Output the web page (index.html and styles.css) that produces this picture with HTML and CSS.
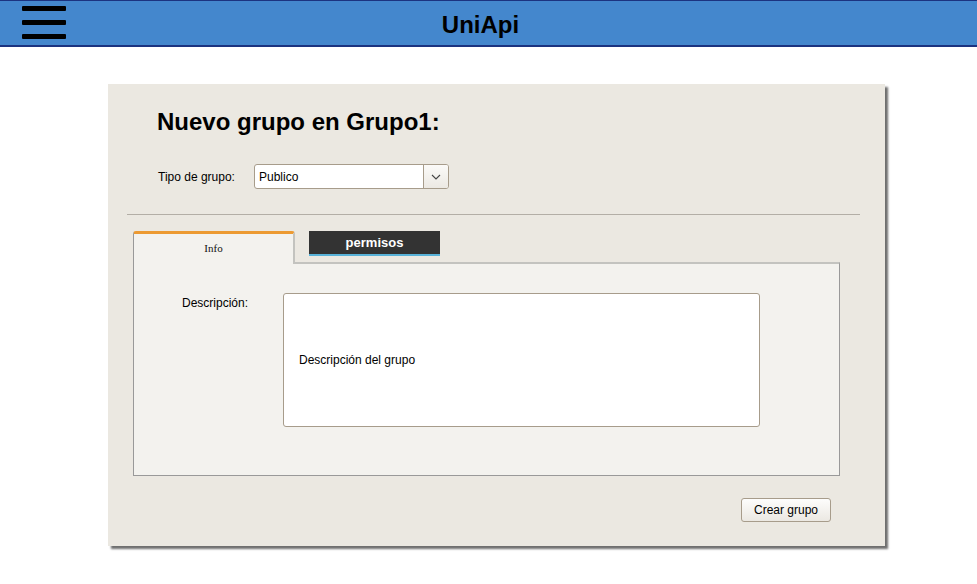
FILE: index.html
```html
<!DOCTYPE html>
<html lang="es">
<head>
<meta charset="utf-8">
<title>UniApi</title>
<link rel="stylesheet" href="styles.css">
</head>
<body>
<header class="topbar">
  <div class="burger"><span></span><span></span><span></span></div>
  <h1 class="brand">UniApi</h1>
</header>
<main class="card">
  <h2 class="card-title">Nuevo grupo en Grupo1:</h2>
  <div class="type-row">
    <label class="type-label">Tipo de grupo:</label>
    <div class="select">
      <span class="select-value">Publico</span>
      <span class="select-btn">
        <svg width="10" height="6" viewBox="0 0 10 6"><path d="M1 1 L5 5 L9 1" fill="none" stroke="#444" stroke-width="1.1"/></svg>
      </span>
    </div>
  </div>
  <hr class="sep">
  <div class="tabs">
    <div class="tab-bar">
      <div class="tab tab-active">Info</div>
      <div class="tab tab-dark">permisos</div>
    </div>
    <div class="panel">
      <div class="desc-row">
        <label class="desc-label">Descripción:</label>
        <div class="textarea">Descripción del grupo</div>
      </div>
    </div>
  </div>
  <div class="actions">
    <button class="btn">Crear grupo</button>
  </div>
</main>
</body>
</html>
```
FILE: styles.css
```css
html, body {
  margin: 0;
  padding: 0;
  background: #ffffff;
  font-family: "Liberation Sans", Arial, sans-serif;
}
body {
  padding-bottom: 30px;
}
.topbar {
  height: 44px;
  background: #4487cd;
  border-top: 1px solid #1c3380;
  border-bottom: 2px solid #1c3380;
  position: relative;
  display: flex;
  align-items: center;
  justify-content: center;
  padding-right: 16px;
}
.burger {
  position: absolute;
  left: 22px;
  top: 5px;
  width: 44px;
  display: flex;
  flex-direction: column;
  gap: 9px;
}
.burger span {
  display: block;
  height: 5px;
  background: #000;
  border-radius: 1px;
}
.brand {
  margin: 0;
  font-size: 24px;
  font-weight: bold;
  color: #000;
  line-height: 1;
  padding-top: 4px;
}
.card {
  display: block;
  margin: 37px 0 0 108px;
  width: 777px;
  height: 462px;
  box-sizing: border-box;
  background: #ebe8e1;
  box-shadow: 3px 3px 2px 0 #6f6f6f;
  padding: 24px 0 0 0;
}
.card-title {
  margin: 0 0 0 49px;
  font-size: 24px;
  font-weight: bold;
  color: #000;
  line-height: 28px;
}
.type-row {
  display: flex;
  align-items: center;
  margin: 28px 0 0 50px;
}
.type-label {
  font-size: 12px;
  color: #000;
  width: 96px;
}
.select {
  width: 195px;
  height: 25px;
  box-sizing: border-box;
  border: 1px solid #a79c8b;
  border-radius: 3px;
  background: #fff;
  display: flex;
  align-items: stretch;
}
.select-value {
  flex: 1;
  font-size: 12px;
  padding-left: 4px;
  display: flex;
  align-items: center;
  color: #000;
}
.select-btn {
  width: 24px;
  border-left: 1px solid #a79c8b;
  background: linear-gradient(#fbfaf8, #ece9e3);
  display: flex;
  align-items: center;
  justify-content: center;
  border-radius: 0 2px 2px 0;
}
.sep {
  margin: 25px 25px 0 19px;
  border: 0;
  border-top: 1px solid #b3aea6;
  height: 0;
}
.tabs {
  margin: 16px 0 0 25px;
  width: 707px;
}
.tab-bar {
  display: flex;
  align-items: flex-start;
  gap: 14px;
  height: 31px;
}
.tab {
  box-sizing: border-box;
}
.tab-active {
  width: 162px;
  height: 33px;
  background: #f3f2ee;
  border-top: 3px solid #ec9a32;
  border-left: 1px solid #999;
  border-right: 2px solid #c3c3bf;
  border-radius: 3px 3px 0 0;
  font-family: "Liberation Serif", "Times New Roman", serif;
  font-size: 11px;
  text-align: center;
  padding-top: 8px;
  position: relative;
  z-index: 1;
  color: #111;
}
.tab-dark {
  width: 131px;
  height: 25px;
  background: #333;
  border-bottom: 2px solid #58b2d8;
  color: #fff;
  font-weight: bold;
  font-size: 13px;
  text-align: center;
  padding-top: 4px;
}
.panel {
  height: 214px;
  box-sizing: border-box;
  background: #f3f2ee;
  border: 1px solid #999;
  border-top: 2px solid #c3c3bf;
  padding: 29px 0 0 48px;
}
.desc-row {
  display: flex;
  align-items: flex-start;
}
.desc-label {
  font-size: 12px;
  color: #000;
  width: 101px;
  padding-top: 3px;
}
.textarea {
  width: 477px;
  height: 134px;
  box-sizing: border-box;
  background: #fff;
  border: 1px solid #a79c8b;
  border-radius: 3px;
  font-size: 12px;
  color: #000;
  padding-left: 15px;
  display: flex;
  align-items: center;
}
.actions {
  display: flex;
  justify-content: flex-end;
  margin: 22px 54px 0 0;
}
.btn {
  width: 90px;
  height: 24px;
  box-sizing: border-box;
  border: 1px solid #a79c8b;
  border-radius: 3px;
  background: linear-gradient(#fdfdfc, #ebe8e2);
  font-family: "Liberation Sans", Arial, sans-serif;
  font-size: 12px;
  color: #000;
  padding: 0;
}
```
